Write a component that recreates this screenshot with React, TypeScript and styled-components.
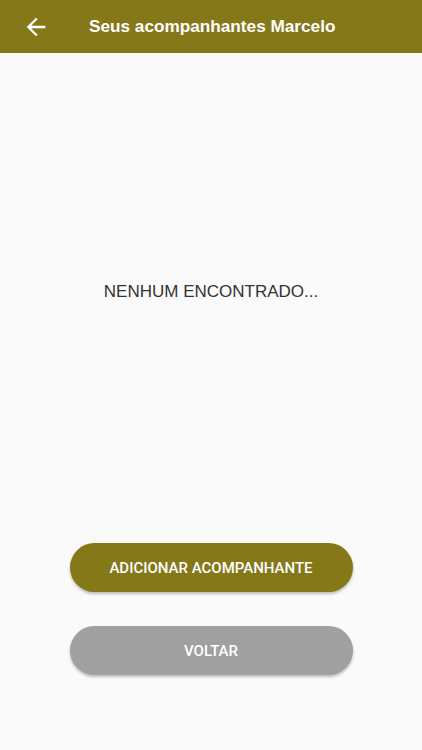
import { createGlobalStyle, styled } from "styled-components";

const GlobalStyle = createGlobalStyle`
  html, body {
    margin: 0;
    padding: 0;
    background: #fafafa;
    font-family: Roboto, "Liberation Sans", Arial, sans-serif;
  }
  #root {
    height: 100vh;
  }
`;

const Page = styled.div`
  height: 100vh;
  display: flex;
  flex-direction: column;
  background: #fafafa;
`;

const Header = styled.header`
  height: 53px;
  flex-shrink: 0;
  background: #847819;
  display: flex;
  align-items: center;
  padding-left: 22px;
  gap: 39px;
  color: #fff;
`;

const BackButton = styled.button`
  border: 0;
  background: none;
  padding: 0;
  display: flex;
  align-items: center;
  color: #fff;
  cursor: pointer;
`;

const Title = styled.h1`
  margin: 0;
  font-family: "Liberation Sans", Arial, sans-serif;
  font-size: 17.2px;
  font-weight: 700;
`;

const Content = styled.main`
  flex: 1;
  display: flex;
  align-items: center;
  justify-content: center;
`;

const Empty = styled.p`
  margin: 0;
  font-family: "Liberation Sans", Arial, sans-serif;
  font-size: 17px;
  color: #333;
`;

const Actions = styled.div`
  display: flex;
  flex-direction: column;
  align-items: center;
  gap: 34px;
  padding: 12px 0 75px;
`;

const Pill = styled.button<{ $tone: "primary" | "muted" }>`
  width: 283px;
  height: 49px;
  border: 0;
  border-radius: 25px;
  background: ${(p) => (p.$tone === "primary" ? "#847819" : "#a0a0a0")};
  color: #fff;
  font-family: Roboto, "Liberation Sans", Arial, sans-serif;
  font-size: 15px;
  font-weight: 500;
  text-transform: uppercase;
  box-shadow: 0 2px 3px rgba(0, 0, 0, 0.25);
  cursor: pointer;
`;

export default function App() {
  return (
    <>
      <GlobalStyle />
      <Page>
        <Header>
          <BackButton aria-label="voltar">
            <svg width="28" height="28" viewBox="0 0 24 24" fill="currentColor">
              <path d="M20 11H7.83l5.59-5.59L12 4l-8 8 8 8 1.41-1.41L7.83 13H20v-2z" />
            </svg>
          </BackButton>
          <Title>Seus acompanhantes Marcelo</Title>
        </Header>
        <Content>
          <Empty>NENHUM ENCONTRADO...</Empty>
        </Content>
        <Actions>
          <Pill $tone="primary">Adicionar acompanhante</Pill>
          <Pill $tone="muted">Voltar</Pill>
        </Actions>
      </Page>
    </>
  );
}
